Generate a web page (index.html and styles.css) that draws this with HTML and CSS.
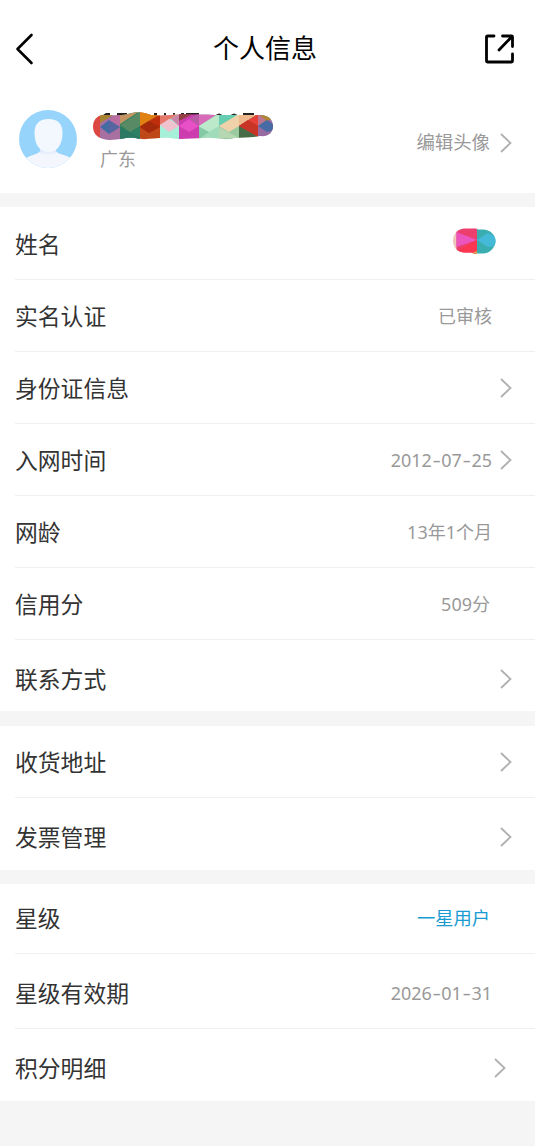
FILE: index.html
```html
<!DOCTYPE html>
<html lang="zh-CN">
<head>
<meta charset="utf-8">
<title>个人信息</title>
<link rel="stylesheet" href="styles.css">
</head>
<body>
<svg width="0" height="0" class="defs"><symbol id="chev" viewBox="0 0 14 22"><path d="M2 2L11.500 11L2 20" fill="none" stroke="#b0b0b0" stroke-width="1.800"/></symbol></svg>
<header class="bar">
  <svg class="back" width="20" height="34" viewBox="0 0 20 34"><path d="M16.500 3L2.500 17L16.500 31" fill="none" stroke="#000" stroke-width="2.600" stroke-linecap="round" stroke-linejoin="round"/></svg>
  <h1 class="title">个人信息</h1>
  <svg class="share" width="32" height="32" viewBox="0 0 32 32"><g fill="none" stroke="#000" stroke-width="2.800" stroke-linecap="round" stroke-linejoin="round"><path d="M10 3H3.500Q2.500 3 2.500 4V28Q2.500 29 3.500 29H27.500Q28.500 29 28.500 28V21M18.500 3H27.500Q28.500 3 28.500 4V13.500M28 3.500L15 17"/></g></svg>
</header>
<section class="profile">
  <svg class="avatar" width="58" height="58" viewBox="0 0 58 58">
    <defs><clipPath id="face"><circle cx="29" cy="29" r="29"/></clipPath><linearGradient id="neck" x1="0" y1="0" x2="0" y2="1"><stop offset="0" stop-color="#d0e0fa"/><stop offset="1" stop-color="#f4f6fd"/></linearGradient></defs>
    <g clip-path="url(#face)"><rect width="58" height="58" fill="#96d4fb"/><path d="M21 36V41C20 44 12 45 7 48V58H52V48C47 45 38 44 37 41V36Z" fill="#f4f6fd"/><path d="M21 37V43Q29 49 37 43V37Z" fill="url(#neck)"/><path d="M29.500 9C39 9 43.500 14 43.500 23C43.500 35 38 42 29.500 42C21 42 15.500 35 15.500 23C15.500 14 20 9 29.500 9Z" fill="#f3f8ff"/></g>
  </svg>
  <div class="who">
    <svg class="mosaic" width="182" height="30" viewBox="92 111 182 30">
      <defs><clipPath id="blob"><path d="M93 127C93 120 97 116 102 115C112 115 120 116 128 114C136 111 144 112 151 115C160 116 172 115 182 114C195 115 204 114 215 115H260C269 115 273 120 273 126C273 133 268 137 260 136C250 138 243 137 235 138C224 141 216 137 205 138C191 138 180 140 170 138C156 137 146 141 135 138C125 137 121 140 110 140C100 140 93 135 93 127Z"/></clipPath></defs>
      <path fill="#27211f" d="M103 115L106 113H110V117H103ZM117 113H127V117H117ZM154 113H157V117H154ZM164 113H166V117H164ZM173 113H175V117H173ZM181 113H184V117H181ZM186 113H199V116H186ZM214 117Q219 110 224 117ZM229 117Q234 110 239 117ZM243 113H254V116H243Z"/>
      <g clip-path="url(#blob)">
        <path fill="#dc4741" d="M92 111H100V141H92Z"/><path fill="#a870a1" d="M100 111H120V141H100Z"/><path fill="#a78430" d="M100 111H120L100 123Z"/><path fill="#bb6da0" d="M120 113V127L109 120Z"/><path fill="#456ba3" d="M100 127L109 120L120 127L109 134Z"/><path fill="#765f9d" d="M109 120L120 127L109 134Z" opacity=".35"/>
        <path fill="#2d8061" d="M120 111H140V141H120Z"/><path fill="#c49563" d="M120 111H140L120 124Z"/><path fill="#588b65" d="M120 125L140 112V126L130 132Z"/><path fill="#2b7863" d="M120 127L140 138V141H120Z"/>
        <path fill="#be4817" d="M140 111H160V141H140Z"/><path fill="#df8212" d="M140 111H160V114L140 126Z"/><path fill="#bf2e0b" d="M140 127L160 115V127L149 133Z"/><path fill="#a52a0b" d="M149 121L160 127L149 133L140 127Z"/>
        <path fill="#a6efd8" d="M160 111H179V141H160Z"/><path fill="#e6796c" d="M160 111H179V114L160 125Z"/><path fill="#f0c2ce" d="M160 125L169 119L179 126L169 132Z"/><path fill="#cb85a9" d="M171 119L179 114V126Z"/>
        <path fill="#cd3caf" d="M179 111H199V141H179Z"/><path fill="#934047" d="M179 111H199L179 121Z"/><path fill="#e750c6" d="M179 126L189 119L199 126L189 132Z"/><path fill="#ba5aa6" d="M189 119L199 113V126Z"/>
        <path fill="#a0dbba" d="M199 111H219V141H199Z"/><path fill="#d86bb8" d="M199 111H219V113L199 126Z"/><path fill="#bde9cb" d="M199 126L219 114V126L209 132Z"/><path fill="#83c9a3" d="M199 127L209 132L199 139Z"/>
        <path fill="#9acaa0" d="M219 111H239V141H219Z"/><path fill="#65cdb0" d="M219 111H239V114L219 126Z"/><path fill="#efd1aa" d="M219 126L239 114V126L229 132Z"/><path fill="#b5d7b1" d="M219 127L239 138H219Z"/>
        <path fill="#486b47" d="M239 111H258V141H239Z"/><path fill="#efb98e" d="M239 111H258V114L239 126Z"/><path fill="#e64138" d="M239 126L258 114V135Z"/><path fill="#c83527" d="M248 120L258 126V137L239 126Z"/>
        <path fill="#976ba1" d="M258 111H274V141H258Z"/><path fill="#ad8733" d="M258 111H274V119L258 123Z"/><path fill="#bb7591" d="M258 114L266 120L258 126Z"/><path fill="#466ba5" d="M258 126L267 120L274 125V130L267 132Z"/>
      </g>
    </svg>
    <div class="place">广东</div>
  </div>
  <div class="value edit">编辑头像</div><svg class="chev"><use href="#chev"/></svg>
</section>
<section class="group basics">
  <div class="row"><span class="label">姓名</span>
    <svg class="pill" width="44" height="26" viewBox="0 0 44 26"><defs><clipPath id="pill"><path d="M13 .5H24L26 1.500H31C38 1.500 43.500 7 43.500 13S38 25.500 31 25.500H22L19 24.500H13C5 24.500 1 19 1 12.500S6 .5 13 .5Z"/></clipPath></defs><g clip-path="url(#pill)"><path fill="#efc6b9" d="M0 0H5V26H0Z"/><path fill="#ec3f6d" d="M4.500 0H25V26H4.500Z"/><path fill="#eb55bd" d="M4.500 4L25 12L4.500 19Z"/><path fill="#fa3650" d="M4.500 23L25 12V26H4.500Z"/><path fill="#3aadb0" d="M25 0H44V26H25Z"/><path fill="#44b9d8" d="M25 12L36 5L44 9V18L36 19Z"/><path fill="#d6b04a" d="M18 26L25 23V26Z"/></g></svg></div>
  <div class="row"><span class="label">实名认证</span><span class="value v-a">已审核</span></div>
  <div class="row"><span class="label">身份证信息</span><svg class="chev"><use href="#chev"/></svg></div>
  <div class="row"><span class="label">入网时间</span><span class="value">2012<i class="dash">-</i>07<i class="dash">-</i>25</span><svg class="chev"><use href="#chev"/></svg></div>
  <div class="row"><span class="label">网龄</span><span class="value v-a">13年1个月</span></div>
  <div class="row"><span class="label">信用分</span><span class="value v-b">509分</span></div>
  <div class="row low last"><span class="label">联系方式</span><svg class="chev"><use href="#chev"/></svg></div>
</section>
<section class="group address">
  <div class="row"><span class="label">收货地址</span><svg class="chev"><use href="#chev"/></svg></div>
  <div class="row low last"><span class="label">发票管理</span><svg class="chev"><use href="#chev"/></svg></div>
</section>
<section class="group stars">
  <div class="row short"><span class="label">星级</span><span class="value v-b star">一星用户</span></div>
  <div class="row tall"><span class="label">星级有效期</span><span class="value v-a">2026<i class="dash">-</i>01<i class="dash">-</i>31</span></div>
  <div class="row low last points"><span class="label">积分明细</span><svg class="chev"><use href="#chev"/></svg></div>
</section>
</body>
</html>
```
FILE: styles.css
```css
* { box-sizing: border-box; }
body { margin: 0; min-height: 1146px; background: #f5f5f5; color: #333; font-family: "Noto Sans CJK SC", sans-serif; }
svg { display: block; flex: none; }
.defs { display: none; }
.bar { height: 96px; padding: 2px 19px 0 15px; background: #fff; display: flex; align-items: center; justify-content: space-between; }
.title { margin: 0 0 5px 11px; font-size: 26px; line-height: 38px; font-weight: 400; color: #000; }
.profile { height: 97px; padding: 0 22px 4px 18px; background: #fff; display: flex; align-items: center; }
.avatar { margin: -7px 15px 0 1px; }
.who { flex: 1; margin-top: -3px; }
.place { padding-left: 8px; font-size: 18px; line-height: 26px; margin-top: 4px; color: #999; }
.group { margin-top: 14px; padding-left: 15px; background: #fff; }
.address { margin-top: 15px; }
.row { height: 72px; padding: 1px 22px 0 0; border-bottom: 1px solid #f0f0f0; display: flex; align-items: center; }
.basics { padding-top: 1px; }
.basics .last { height: 71px; }
.label { flex: 1; font-size: 22.8px; line-height: 34px; }
.value { font-size: 18px; line-height: 26px; color: #999; display: flex; font-family: "Noto Sans", "Noto Sans CJK SC", sans-serif; white-space: nowrap; }
.edit { margin: -1px 9px 0 0; font-size: 18.4px; }
.row .value:not(:last-child) { margin-right: 7px; }
.v-a { margin-right: 21px; }
.v-b { margin-right: 23px; }
.dash { font-style: normal; width: 9.500px; text-align: center; transform: scaleX(1.45); }
.star { color: #189bd3; font-size: 18.300px; }
.chev { width: 14px; height: 22px; }
.pill { margin: -7px 17px 0 0; }
.last { border-bottom: 0; }
.low { padding-top: 6px; }
.short { height: 70px; padding: 0 22px 2px 0; }
.tall { height: 75px; padding-top: 3px; }
.points { padding-right: 28px; }
```
